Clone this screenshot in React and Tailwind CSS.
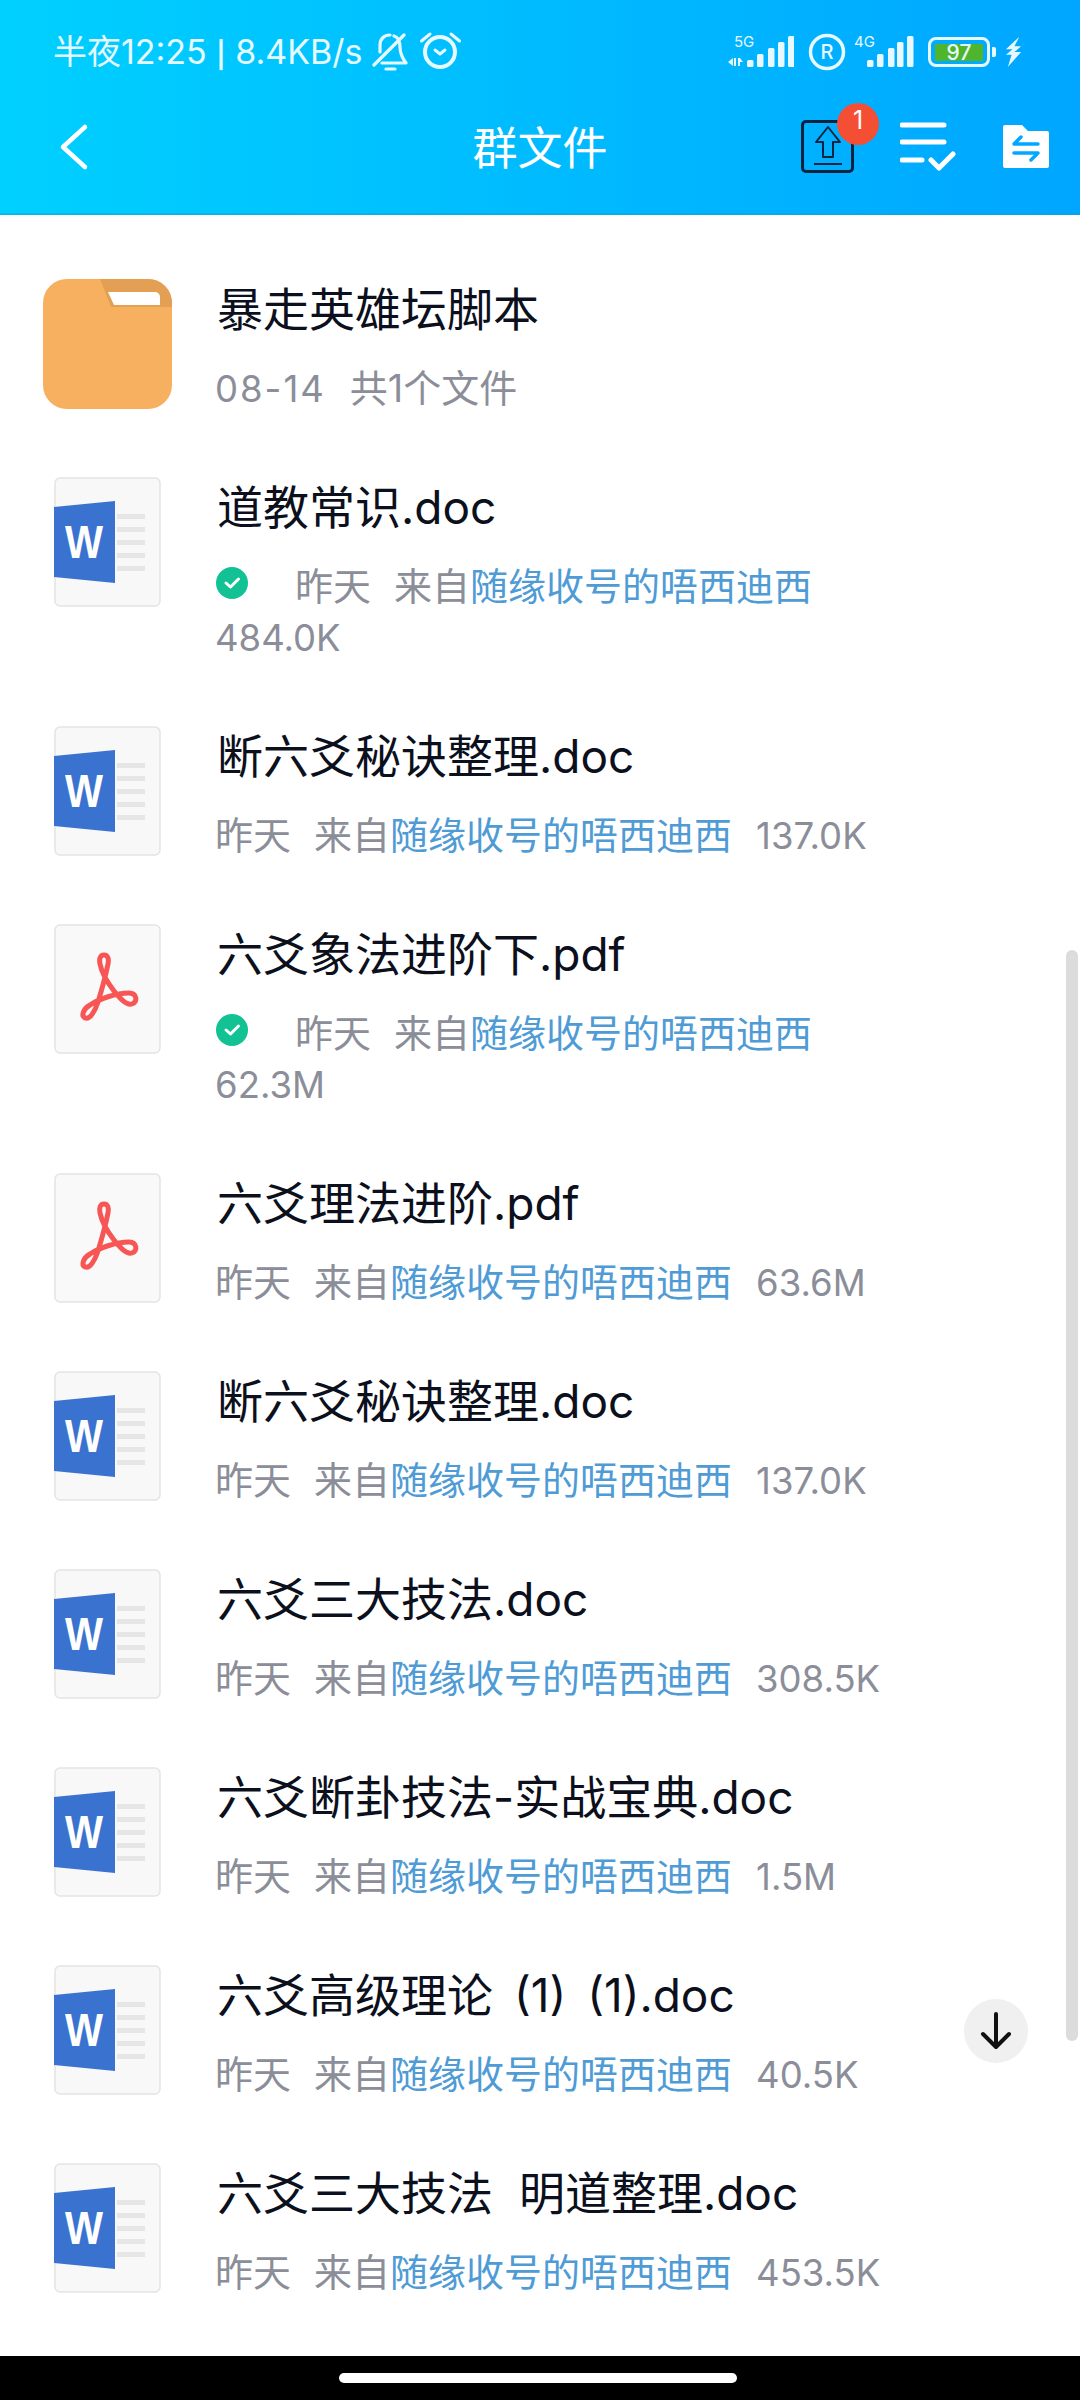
import React from 'react';

const files = [
  { name: '道教常识.doc', type: 'word', size: '484.0K', done: true },
  { name: '断六爻秘诀整理.doc', type: 'word', size: '137.0K' },
  { name: '六爻象法进阶下.pdf', type: 'pdf', size: '62.3M', done: true },
  { name: '六爻理法进阶.pdf', type: 'pdf', size: '63.6M' },
  { name: '断六爻秘诀整理.doc', type: 'word', size: '137.0K' },
  { name: '六爻三大技法.doc', type: 'word', size: '308.5K' },
  { name: '六爻断卦技法-实战宝典.doc', type: 'word', size: '1.5M' },
  { name: '六爻高级理论 (1) (1).doc', type: 'word', size: '40.5K', wide: true },
  { name: '六爻三大技法  明道整理.doc', type: 'word', size: '453.5K' },
];

const font = "font-['Inter','Noto_Sans_CJK_SC',sans-serif]";

function Signal({ label, arrows }) {
  const bars = arrows ? [19, 29, 40, 50, 60] : [14, 24, 35, 44, 54];
  const heights = [7, 13, 19, 25, 31];
  return (
    <svg className="mt-[-6px]" width={arrows ? 66 : 61} height="40" viewBox={arrows ? '0 -6 66 40' : '0 -6 61 40'} fill="#e8f8ff">
      <text x={arrows ? 6 : 1} y="12" fontSize="15" fontFamily="Inter, sans-serif">{label}</text>
      {arrows && <path d="M0 27l5-4v8zM6 23h2v8H6zM10 23h2v8h-2zM12 23l3 4h-3z" />}
      {bars.map((x, i) => (
        <rect key={i} x={x} y={32 - heights[i]} width="6.5" height={heights[i]} rx="1.5" />
      ))}
    </svg>
  );
}

function StatusBar() {
  return (
    <div className="flex h-[106px] items-center justify-between pl-[53px] pr-[58px] pb-[2px] text-[#e6f9ff]">
      <div className="flex items-center">
        <span className="text-[34px] leading-none whitespace-nowrap">
          半夜12:25 <span className="text-[26px] font-semibold">|</span> 8.4KB/s
        </span>
        <svg className="ml-[9px]" width="36" height="40" viewBox="0 0 36 40" fill="none" stroke="#e6f9ff" strokeWidth="3.2" strokeLinecap="round" strokeLinejoin="round">
          <path d="M8 20V13C8 7 12 3 18 3" />
          <path d="M2 33L32 3" />
          <path d="M22 4c4 1 6 6 6 11 0 7 3 12 6 16H10" />
          <path d="M14 37h9" />
        </svg>
        <svg className="ml-[12px]" width="41" height="40" viewBox="0 0 41 40" fill="none" stroke="#e6f9ff" strokeLinecap="round" strokeLinejoin="round">
          <circle cx="20" cy="20" r="15" strokeWidth="4" />
          <path d="M15 18l5 4 5-4" strokeWidth="3" />
          <path d="M1.5 9L10 2M31 2l8.5 7" strokeWidth="3" />
        </svg>
      </div>
      <div className="flex items-center">
        <Signal label="5G" arrows />
        <svg className="ml-[14px]" width="38" height="38" viewBox="0 0 38 38" fill="none">
          <circle cx="19" cy="19" r="16.5" stroke="#e6f9ff" strokeWidth="3.5" />
          <text x="19" y="26" textAnchor="middle" fontSize="20" fontWeight="500" fill="#e6f9ff" fontFamily="Inter, sans-serif">R</text>
        </svg>
        <div className="ml-[7px]"><Signal label="4G" /></div>
        <div className="ml-[14px] flex h-[30px] w-[62px] items-center justify-center rounded-[8px] border-[3.5px] border-[#e6f9ff]">
          <div className="flex h-[17px] w-[48px] items-center justify-center bg-[#4eb52c] text-[21px] leading-none font-medium text-[#e6f9ff]">97</div>
        </div>
        <div className="ml-[2px] h-[10px] w-[4px] rounded-r-[2px] bg-[#e6f9ff]" />
        <svg className="ml-[9px]" width="17" height="32" viewBox="0 0 18 32" fill="#e6f9ff">
          <path d="M15 0L1 13h7L1 19h6L3 32 17 16h-7l7-6h-7z" />
        </svg>
      </div>
    </div>
  );
}

function Toolbar() {
  return (
    <div className="grid h-[107px] grid-cols-[1fr_auto_1fr] items-center pb-[26px]">
      <svg className="ml-[58px]" width="32" height="48" viewBox="0 0 32 48" fill="none" stroke="#ffffff" strokeWidth="4.5" strokeLinecap="round" strokeLinejoin="round">
        <path d="M27 4L5 24l22 20" />
      </svg>
      <h1 className="mt-[3px] text-[45px] leading-none font-normal text-white">群文件</h1>
      <div className="flex items-center justify-end pr-[31px]">
        <div className="relative h-[53px] w-[53px] rounded-[5px] border-[3px] border-[#06233f]">
          <svg className="absolute left-[10px] top-[2px]" width="28" height="42" viewBox="0 0 28 42" fill="none" stroke="#06233f" strokeWidth="2" strokeLinejoin="round">
            <path d="M14 2L2 17h7v15h10V17h7z" />
            <path d="M0 39h28" />
          </svg>
          <span className="absolute left-[33px] top-[-20px] flex h-[42px] w-[42px] items-center justify-center rounded-full bg-[#f44f35] pb-[8px] text-[25px] leading-none text-white">1</span>
        </div>
        <svg className="ml-[46px]" width="56" height="50" viewBox="0 0 56 50" fill="none" stroke="#ffffff" strokeLinecap="round" strokeLinejoin="round">
          <path d="M2 3h42M2 20h42M2 38h20" strokeWidth="5" />
          <path d="M31 38l8 8 14-14" strokeWidth="5" />
        </svg>
        <svg className="ml-[47px]" width="46" height="43" viewBox="0 0 46 43">
          <path d="M0 2a2 2 0 012-2h17l6 6h19a2 2 0 012 2v33a2 2 0 01-2 2H2a2 2 0 01-2-2z" fill="#ffffff" />
          <path d="M35 19H11l7-7M11 28h24l-7 7" fill="none" stroke="#00a8ff" strokeWidth="3.5" strokeLinecap="round" strokeLinejoin="round" />
        </svg>
      </div>
    </div>
  );
}

function FolderIcon() {
  return (
    <svg className="ml-[43px]" width="129" height="130" viewBox="0 0 129 130">
      <rect width="129" height="130" rx="24" fill="#f6b060" />
      <path d="M57 0h48a24 24 0 0124 24v4H68z" fill="#e3a055" />
      <path d="M65 13h47a5 5 0 015 5v8H71z" fill="#ffffff" />
    </svg>
  );
}

function WordIcon() {
  return (
    <svg className="ml-[54px]" width="107" height="130" viewBox="0 0 107 130">
      <rect x="1" y="1" width="105" height="128" rx="5" fill="#f8f8f8" stroke="#e4e4e4" strokeWidth="1.5" />
      <path d="M0 30l61-6v82l-61-6z" fill="#3a72cf" />
      <path d="M63 37h28v5H63zM63 50h28v5H63zM63 63h28v5H63zM63 76h28v5H63zM63 89h28v5H63z" fill="#e6e6e6" />
      <text x="30" y="81" textAnchor="middle" fontSize="46" fontWeight="700" fill="#ffffff" fontFamily="Liberation Sans, sans-serif" textLength="38" lengthAdjust="spacingAndGlyphs">W</text>
    </svg>
  );
}

function PdfIcon() {
  return (
    <svg className="ml-[54px]" width="108" height="130" viewBox="0 0 108 130">
      <rect x="1" y="1" width="105" height="128" rx="5" fill="#f9f9f9" stroke="#e4e4e4" strokeWidth="1.5" />
      <path
        d="M50 31C46 31 45 35 46 40c2 10 7 18 14 27 4 5 12 15 18 13 6-2 5-11-3-11-13 0-30 6-39 12-7 4-9 11-5 13 5 2 10-7 13-16 4-13 8-28 10-38 1-5 0-9-4-9z"
        fill="none"
        stroke="#f85555"
        strokeWidth="5"
        strokeLinejoin="round"
      />
    </svg>
  );
}

function DoneBadge() {
  return (
    <svg className="ml-[1px] mr-[47px] inline-block align-[1px]" width="32" height="32" viewBox="0 0 32 32" fill="none">
      <circle cx="16" cy="16" r="16" fill="#12c295" />
      <path d="M10 16l4.5 4 8-8" stroke="#ffffff" strokeWidth="3" strokeLinecap="round" strokeLinejoin="round" />
    </svg>
  );
}

function Row({ icon, title, wide, children }) {
  return (
    <div className="flex items-start pt-[34px] pb-[29px]">
      <div className="w-[217px] shrink-0">{icon}</div>
      <div className="w-[690px]">
        <div className={`h-[60px] text-[46px] leading-[60px] whitespace-pre text-[#0b101c] ${wide ? '[word-spacing:8px]' : ''}`}>{title}</div>
        <div className="mt-[24px] ml-[-2px] text-[38px] leading-[51px] text-[#8b8e99]">{children}</div>
      </div>
    </div>
  );
}

export default function App() {
  return (
    <div className={`relative flex h-[2400px] w-[1080px] flex-col overflow-hidden bg-white ${font}`}>
      <header className="h-[215px] shrink-0 border-b-[2px] border-[#0ba4d6]/50 bg-gradient-to-r from-[#00d0ff] to-[#00a6ff]">
        <StatusBar />
        <Toolbar />
      </header>

      <main className="flex-1 pt-[30px]">
        <Row icon={<FolderIcon />} title="暴走英雄坛脚本">
          <span className="mr-[24px] tracking-[2px] text-[36.5px] leading-none whitespace-nowrap">08-14</span>
          <span className="whitespace-nowrap">共1个文件</span>
        </Row>
        {files.map((f, i) => (
          <Row key={i} icon={f.type === 'pdf' ? <PdfIcon /> : <WordIcon />} title={f.name} wide={f.wide}>
            {f.done && <DoneBadge />}
            <span className="mr-[23px] whitespace-nowrap">昨天</span>
            <span className="mr-[24px] whitespace-nowrap">
              来自<span className="text-[#4f9bd5]">随缘收号的唔西迪西</span>
            </span>
            <span className="text-[36.5px] leading-none whitespace-nowrap">{f.size}</span>
          </Row>
        ))}
      </main>

      <div className="flex h-[44px] shrink-0 items-center justify-center bg-black pr-[5px]">
        <div className="h-[10px] w-[398px] rounded-full bg-white" />
      </div>

      <div className="absolute left-[1066px] top-[950px] h-[1091px] w-[12px] rounded-full bg-[#dcdcdc]" />
      <div className="absolute left-[964px] top-[1999px] flex h-[64px] w-[64px] items-center justify-center rounded-full bg-[#f0f0f0]">
        <svg width="32" height="40" viewBox="0 0 32 40" fill="none" stroke="#111111" strokeWidth="4" strokeLinecap="round" strokeLinejoin="round">
          <path d="M16 3v33M3 23l13 13 13-13" />
        </svg>
      </div>
    </div>
  );
}
